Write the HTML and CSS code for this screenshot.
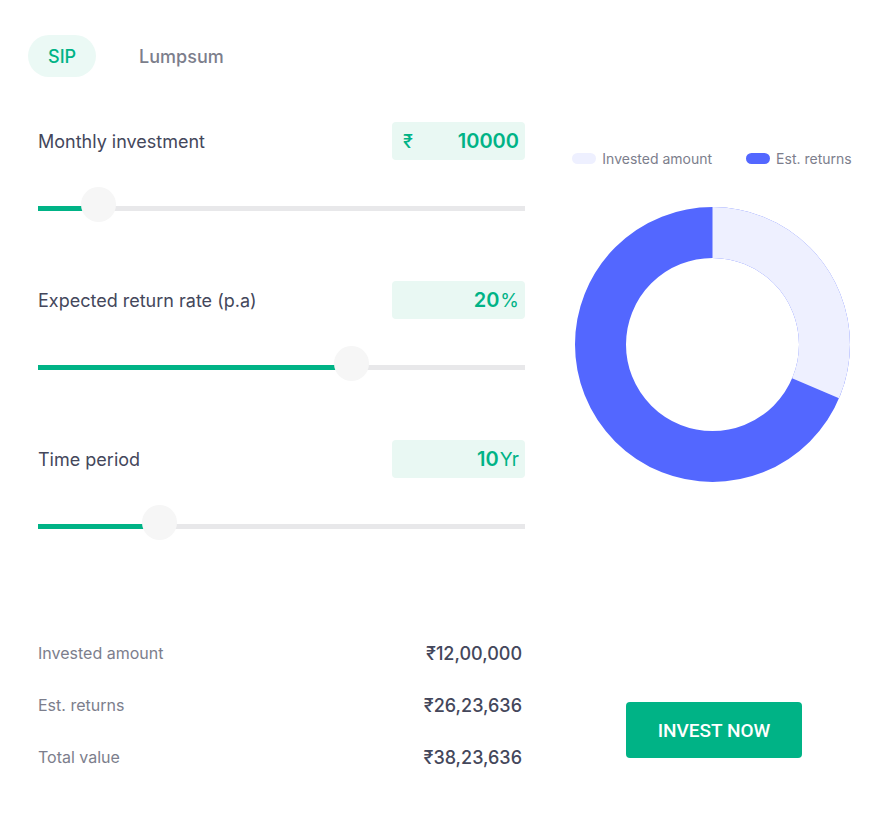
FILE: index.html
```html
<!DOCTYPE html>
<html lang="en">
<head>
<meta charset="utf-8">
<title>SIP Calculator</title>
<link rel="stylesheet" href="styles.css">
</head>
<body>
<div class="page">
  <div class="tabs">
    <div class="tab tab-active">SIP</div>
    <div class="tab">Lumpsum</div>
  </div>
  <div class="main">
    <div class="left">
      <div class="field">
        <div class="field-head">
          <div class="label">Monthly investment</div>
          <div class="box"><span class="unit-pre">₹</span><span class="value">10000</span></div>
        </div>
        <div class="slider">
          <div class="fill" style="width:61px"></div>
          <div class="thumb" style="left:43px"></div>
        </div>
      </div>
      <div class="field">
        <div class="field-head">
          <div class="label">Expected return rate (p.a)</div>
          <div class="box box-end"><span class="value">20</span><span class="unit-post">%</span></div>
        </div>
        <div class="slider">
          <div class="fill" style="width:314px"></div>
          <div class="thumb" style="left:296px"></div>
        </div>
      </div>
      <div class="field">
        <div class="field-head">
          <div class="label">Time period</div>
          <div class="box box-end"><span class="value">10</span><span class="unit-post">Yr</span></div>
        </div>
        <div class="slider">
          <div class="fill" style="width:122px"></div>
          <div class="thumb" style="left:104px"></div>
        </div>
      </div>
      <div class="summary">
        <div class="sum-row"><span class="sum-label">Invested amount</span><span class="sum-value">₹12,00,000</span></div>
        <div class="sum-row"><span class="sum-label">Est. returns</span><span class="sum-value">₹26,23,636</span></div>
        <div class="sum-row"><span class="sum-label">Total value</span><span class="sum-value">₹38,23,636</span></div>
      </div>
    </div>
    <div class="right">
      <div class="legend">
        <div class="legend-item"><span class="swatch swatch-invested"></span>Invested amount</div>
        <div class="legend-item"><span class="swatch swatch-returns"></span>Est. returns</div>
      </div>
      <svg class="donut" width="275" height="275" viewBox="0 0 275 275">
        <circle cx="137.5" cy="137.5" r="112" fill="none" stroke="#5367ff" stroke-width="51"/>
        <circle cx="137.5" cy="137.5" r="112" fill="none" stroke="#eef0ff" stroke-width="51" stroke-dasharray="220.8 703.72" transform="rotate(-90 137.5 137.5)"/>
      </svg>
      <button class="invest">INVEST NOW</button>
    </div>
  </div>
</div>
</body>
</html>
```
FILE: styles.css
```css
* { box-sizing: border-box; }
html, body { margin: 0; padding: 0; background: #ffffff; }
body { font-family: Inter, "Noto Sans", "DejaVu Sans", sans-serif; color: #44475b; }
.page { width: 872px; height: 815px; }
.tabs { display: flex; gap: 23px; padding: 35px 0 0 28px; }
.tab { height: 42px; padding: 0 20px; border-radius: 21px; display: flex; align-items: center; font-size: 18px; font-weight: 500; color: #7c7e8c; }
.tab-active { background: #ebf9f5; color: #00b386; }
.main { display: grid; grid-template-columns: 487px 304px; column-gap: 35px; padding: 45px 0 0 38px; }
.field + .field { margin-top: 70px; }
.field-head { display: flex; justify-content: space-between; align-items: center; height: 38px; }
.label { font-size: 18px; color: #44475b; }
.box { width: 133px; height: 38px; background: #e9f8f3; border-radius: 4px; display: flex; align-items: center; justify-content: space-between; padding: 0 6px 0 11px; color: #00b386; }
.box-end { justify-content: flex-end; }
.value { font-size: 20px; font-weight: 600; }
.unit-pre { font-size: 18px; font-weight: 500; }
.unit-post { font-size: 19px; font-weight: 400; margin-left: 1px; }
.slider { position: relative; margin-top: 46px; height: 5px; background: #e8e8ea; }
.fill { height: 5px; background: #00b386; }
.thumb { position: absolute; top: -19px; width: 35px; height: 35px; border-radius: 50%; background: #f6f6f6; }
.summary { margin-top: 114px; display: flex; flex-direction: column; gap: 32px; padding-right: 3px; }
.sum-row { display: flex; justify-content: space-between; align-items: center; height: 20px; }
.sum-label { font-size: 16px; color: #7c7e8c; }
.sum-value { font-size: 18px; font-weight: 500; color: #44475b; }
.right { display: flex; flex-direction: column; align-items: center; }
.legend { display: flex; gap: 34px; margin-top: 26px; height: 20px; align-items: center; font-size: 14px; color: #7c7e8c; }
.legend-item { display: flex; align-items: center; gap: 6px; }
.swatch { width: 24px; height: 11px; border-radius: 6px; display: inline-block; }
.swatch-invested { background: #eef0ff; }
.swatch-returns { background: #5367ff; }
.donut { margin-top: 39px; display: block; }
.invest { margin-top: 220px; width: 176px; height: 56px; border: none; border-radius: 4px; background: #00b386; color: #ffffff; font-family: Roboto, "Noto Sans", sans-serif; font-size: 19px; font-weight: 500; margin-left: 4px; }
```
